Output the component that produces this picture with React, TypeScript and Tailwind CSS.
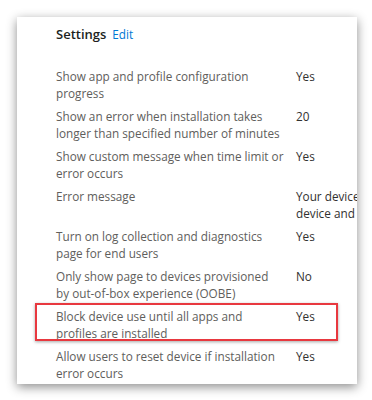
const rows: { label: string; value: string[]; highlight?: boolean }[] = [
  { label: "Show app and profile configuration progress", value: ["Yes"] },
  { label: "Show an error when installation takes longer than specified number of minutes", value: ["20"] },
  { label: "Show custom message when time limit or error occurs", value: ["Yes"] },
  { label: "Error message", value: ["Your device is being set up.", "device and try again."] },
  { label: "Turn on log collection and diagnostics page for end users", value: ["Yes"] },
  { label: "Only show page to devices provisioned by out-of-box experience (OOBE)", value: ["No"] },
  { label: "Block device use until all apps and profiles are installed", value: ["Yes"], highlight: true },
  { label: "Allow users to reset device if installation error occurs", value: ["Yes"] },
];

export default function App() {
  return (
    <div className="h-[400px] w-[372px] bg-white pl-[17px] pt-[17px] font-['Open_Sans',sans-serif]">
      <div className="relative h-[367px] w-[340px] overflow-hidden bg-white shadow-[0_3px_10px_rgba(0,0,0,0.45)]">
        <div className="flex items-baseline gap-[6px] pl-[39px] pt-[7px] leading-[20px]">
          <span className="text-[13px] font-semibold text-[#201f1e]">Settings</span>
          <span className="text-[11.75px] text-[#0078d4]">Edit</span>
        </div>
        <div className="mt-[24px] flex flex-col">
          {rows.map((r) => (
            <div key={r.label} className="relative flex h-[40px] pl-[39px] text-[11.75px] leading-[17px]">
              <div className="w-[240px] shrink-0 pr-[12px] text-[#605e5c]">{r.label}</div>
              <div className="w-[200px] shrink-0 text-[#323130]">
                {r.value.map((v) => (
                  <div key={v} className="whitespace-nowrap">{v}</div>
                ))}
              </div>
              {r.highlight && (
                <div className="absolute left-[18px] top-[-5px] h-[38px] w-[303px] border-2 border-[#e8383f] shadow-[0_1px_3px_rgba(0,0,0,0.35)]" />
              )}
            </div>
          ))}
        </div>
      </div>
    </div>
  );
}
